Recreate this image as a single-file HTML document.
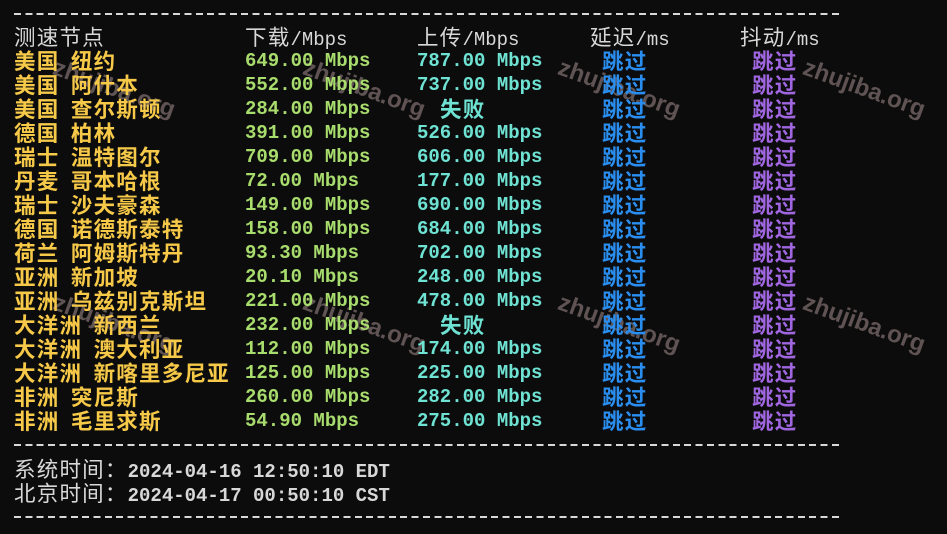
<!DOCTYPE html>
<html><head><meta charset="utf-8"><style>
html,body{margin:0;width:947px;height:534px;overflow:hidden}
body{background:#0c0c0c;position:relative;font-family:"Liberation Mono","Noto Sans CJK SC",monospace;font-size:19px;color:#d8d8d8}
.r{position:absolute;left:0;height:24px;line-height:24px;white-space:pre}
.r span{position:absolute;top:0;white-space:pre}
.k{font-style:normal;font-size:21.5px;line-height:24px;letter-spacing:1.22px;font-family:"Noto Sans CJK SC",sans-serif}
.b{font-weight:bold}
.y{color:#f7c948;left:14px}.g{color:#a8dc6c;left:245px}.c{color:#6fe3d3;left:417px}.f{color:#6fe3d3;left:440px}
.l{color:#2a8ef0;left:602px}.p{color:#a066e0;left:752px}
.d{position:absolute;left:14px;width:829px;height:2px;background-image:repeating-linear-gradient(90deg,#d8d8d8 0 7px,transparent 7px 11.36px)}
#wm{position:absolute;left:0;top:0;width:947px;height:534px;overflow:hidden}
.w{position:absolute;color:rgba(200,170,170,.45);font-family:"Liberation Sans",sans-serif;font-weight:bold;font-size:24px;transform:rotate(20deg);white-space:nowrap}
</style></head><body>
<div id="wm">
<div class="w" style="left:300px;top:75px">zhujiba.org</div>
<div class="w" style="left:555px;top:75px">zhujiba.org</div>
<div class="w" style="left:800px;top:75px">zhujiba.org</div>
<div class="w" style="left:50px;top:75px">zhujiba.org</div>
<div class="w" style="left:300px;top:310px">zhujiba.org</div>
<div class="w" style="left:555px;top:310px">zhujiba.org</div>
<div class="w" style="left:800px;top:310px">zhujiba.org</div>
<div class="w" style="left:50px;top:310px">zhujiba.org</div>
</div>
<div class="d" style="top:13px"></div>
<div class="r" style="top:25px"><span style="left:14px"><i class="k">测速节点</i></span><span style="left:245px"><i class="k">下载</i>/Mbps</span><span style="left:417px"><i class="k">上传</i>/Mbps</span><span style="left:590px"><i class="k">延迟</i>/ms</span><span style="left:740px"><i class="k">抖动</i>/ms</span></div>
<div class="r b" style="top:49px"><span class="y"><i class="k">美国</i> <i class="k">纽约</i></span><span class="g">649.00 Mbps</span><span class="c">787.00 Mbps</span><span class="l"><i class="k">跳过</i></span><span class="p"><i class="k">跳过</i></span></div>
<div class="r b" style="top:73px"><span class="y"><i class="k">美国</i> <i class="k">阿什本</i></span><span class="g">552.00 Mbps</span><span class="c">737.00 Mbps</span><span class="l"><i class="k">跳过</i></span><span class="p"><i class="k">跳过</i></span></div>
<div class="r b" style="top:97px"><span class="y"><i class="k">美国</i> <i class="k">查尔斯顿</i></span><span class="g">284.00 Mbps</span><span class="f"><i class="k">失败</i></span><span class="l"><i class="k">跳过</i></span><span class="p"><i class="k">跳过</i></span></div>
<div class="r b" style="top:121px"><span class="y"><i class="k">德国</i> <i class="k">柏林</i></span><span class="g">391.00 Mbps</span><span class="c">526.00 Mbps</span><span class="l"><i class="k">跳过</i></span><span class="p"><i class="k">跳过</i></span></div>
<div class="r b" style="top:145px"><span class="y"><i class="k">瑞士</i> <i class="k">温特图尔</i></span><span class="g">709.00 Mbps</span><span class="c">606.00 Mbps</span><span class="l"><i class="k">跳过</i></span><span class="p"><i class="k">跳过</i></span></div>
<div class="r b" style="top:169px"><span class="y"><i class="k">丹麦</i> <i class="k">哥本哈根</i></span><span class="g">72.00 Mbps</span><span class="c">177.00 Mbps</span><span class="l"><i class="k">跳过</i></span><span class="p"><i class="k">跳过</i></span></div>
<div class="r b" style="top:193px"><span class="y"><i class="k">瑞士</i> <i class="k">沙夫豪森</i></span><span class="g">149.00 Mbps</span><span class="c">690.00 Mbps</span><span class="l"><i class="k">跳过</i></span><span class="p"><i class="k">跳过</i></span></div>
<div class="r b" style="top:217px"><span class="y"><i class="k">德国</i> <i class="k">诺德斯泰特</i></span><span class="g">158.00 Mbps</span><span class="c">684.00 Mbps</span><span class="l"><i class="k">跳过</i></span><span class="p"><i class="k">跳过</i></span></div>
<div class="r b" style="top:241px"><span class="y"><i class="k">荷兰</i> <i class="k">阿姆斯特丹</i></span><span class="g">93.30 Mbps</span><span class="c">702.00 Mbps</span><span class="l"><i class="k">跳过</i></span><span class="p"><i class="k">跳过</i></span></div>
<div class="r b" style="top:265px"><span class="y"><i class="k">亚洲</i> <i class="k">新加坡</i></span><span class="g">20.10 Mbps</span><span class="c">248.00 Mbps</span><span class="l"><i class="k">跳过</i></span><span class="p"><i class="k">跳过</i></span></div>
<div class="r b" style="top:289px"><span class="y"><i class="k">亚洲</i> <i class="k">乌兹别克斯坦</i></span><span class="g">221.00 Mbps</span><span class="c">478.00 Mbps</span><span class="l"><i class="k">跳过</i></span><span class="p"><i class="k">跳过</i></span></div>
<div class="r b" style="top:313px"><span class="y"><i class="k">大洋洲</i> <i class="k">新西兰</i></span><span class="g">232.00 Mbps</span><span class="f"><i class="k">失败</i></span><span class="l"><i class="k">跳过</i></span><span class="p"><i class="k">跳过</i></span></div>
<div class="r b" style="top:337px"><span class="y"><i class="k">大洋洲</i> <i class="k">澳大利亚</i></span><span class="g">112.00 Mbps</span><span class="c">174.00 Mbps</span><span class="l"><i class="k">跳过</i></span><span class="p"><i class="k">跳过</i></span></div>
<div class="r b" style="top:361px"><span class="y"><i class="k">大洋洲</i> <i class="k">新喀里多尼亚</i></span><span class="g">125.00 Mbps</span><span class="c">225.00 Mbps</span><span class="l"><i class="k">跳过</i></span><span class="p"><i class="k">跳过</i></span></div>
<div class="r b" style="top:385px"><span class="y"><i class="k">非洲</i> <i class="k">突尼斯</i></span><span class="g">260.00 Mbps</span><span class="c">282.00 Mbps</span><span class="l"><i class="k">跳过</i></span><span class="p"><i class="k">跳过</i></span></div>
<div class="r b" style="top:409px"><span class="y"><i class="k">非洲</i> <i class="k">毛里求斯</i></span><span class="g">54.90 Mbps</span><span class="c">275.00 Mbps</span><span class="l"><i class="k">跳过</i></span><span class="p"><i class="k">跳过</i></span></div>
<div class="d" style="top:444px"></div>
<div class="r" style="top:457px"><span style="left:14px"><i class="k">系统时间：</i><b>2024-04-16 12:50:10 EDT</b></span></div>
<div class="r" style="top:481px"><span style="left:14px"><i class="k">北京时间：</i><b>2024-04-17 00:50:10 CST</b></span></div>
<div class="d" style="top:516px"></div>
</body></html>
